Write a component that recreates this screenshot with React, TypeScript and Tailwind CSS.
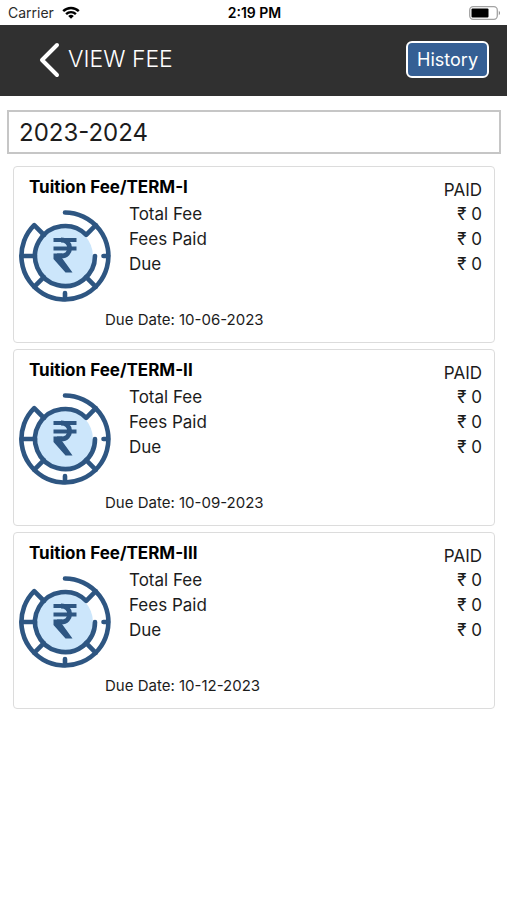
const FEES = [
  { title: "Tuition Fee/TERM-I", status: "PAID", total: 0, paid: 0, due: 0, dueDate: "10-06-2023" },
  { title: "Tuition Fee/TERM-II", status: "PAID", total: 0, paid: 0, due: 0, dueDate: "10-09-2023" },
  { title: "Tuition Fee/TERM-III", status: "PAID", total: 0, paid: 0, due: 0, dueDate: "10-12-2023" },
];

type Fee = (typeof FEES)[number];

function WifiIcon() {
  return (
    <svg viewBox="0 0 18 13" className="h-[13px] w-[18px]" fill="none" stroke="black" strokeWidth="2.4" aria-hidden="true">
      <path d="M1.2 5.2a11 11 0 0 1 15.6 0" />
      <path d="M4.1 8.1a7 7 0 0 1 9.8 0" />
      <path d="M9 12.8 6.2 10a4 4 0 0 1 5.6 0Z" fill="black" stroke="none" />
    </svg>
  );
}

function BatteryIcon() {
  return (
    <svg viewBox="0 0 32 14" className="h-[14px] w-8" aria-hidden="true">
      <rect x="0.7" y="0.7" width="27.6" height="12.6" rx="3.5" fill="white" stroke="#a3a3a3" strokeWidth="1.3" />
      <rect x="2.5" y="2.5" width="17" height="9" rx="1" fill="black" />
      <path d="M29.8 4.8c1.6.8 1.6 3.6 0 4.4Z" fill="#8a8a8a" />
    </svg>
  );
}

function FeeIcon() {
  return (
    <svg
      viewBox="0 0 92 92"
      className="size-[92px] shrink-0"
      fill="none"
      stroke="#2e5682"
      strokeWidth="4.6"
      strokeLinecap="round"
      strokeLinejoin="round"
      aria-hidden="true"
    >
      <circle cx="45" cy="46" r="29" fill="#cce6fb" stroke="none" />
      <path d="M46 2.5A43.5 43.5 0 1 1 15.2 15.2L25 25" />
      <path d="M76 46A30 30 0 1 1 67.2 24.8L76.8 15.2" />
      <path d="M2.5 46H16M15.2 76.8 24.8 67.2M76.8 76.8 67.2 67.2M46 89V83M89 46H84.5" />
      <g strokeWidth="4" strokeLinecap="butt" strokeLinejoin="miter">
        <path d="M34.5 30H57.5M34.5 38.5H57.5" />
        <path d="M42 30C53.5 30 53.5 46 42 46H38" strokeWidth="4.8" />
        <path d="M34.5 43.6H43V48L53.5 62.5H46.5L34.5 49Z" fill="#2e5682" stroke="none" />
      </g>
    </svg>
  );
}

function AmountRow({ label, amount }: { label: string; amount: number }) {
  return (
    <div className="flex justify-between">
      <dt>{label}</dt>
      <dd>₹ {amount}</dd>
    </div>
  );
}

function FeeCard({ fee }: { fee: Fee }) {
  return (
    <li className="rounded border border-[#dcdcdc] pt-2 pr-3 pb-3 pl-[5px] text-[#1c1c1c]">
      <div className="flex items-start justify-between pl-[10px]">
        <h2 className="text-[17px] leading-6 font-bold text-black">{fee.title}</h2>
        <span className="pt-[3px] text-[17px] leading-6">{fee.status}</span>
      </div>
      <div className="flex gap-[18px]">
        <div className="pt-2">
          <FeeIcon />
        </div>
        <dl className="flex-1 text-[17px] leading-[25px]">
          <AmountRow label="Total Fee" amount={fee.total} />
          <AmountRow label="Fees Paid" amount={fee.paid} />
          <AmountRow label="Due" amount={fee.due} />
        </dl>
      </div>
      <p className="pt-2 pl-[86px] text-[15px] leading-5">Due Date: {fee.dueDate}</p>
    </li>
  );
}

export default function App() {
  return (
    <div className="min-h-screen bg-white font-['Inter','Noto_Sans',sans-serif] text-black">
      <div className="grid h-[25px] grid-cols-3 items-center pr-[6px] pl-2 text-sm">
        <div className="flex items-center gap-2 text-[#2b2b2b]">
          Carrier
          <WifiIcon />
        </div>
        <div className="text-center font-semibold">2:19 PM</div>
        <div className="flex justify-end">
          <BatteryIcon />
        </div>
      </div>

      <header className="flex h-[71px] items-center justify-between bg-[#303030] pr-[18px] pb-[2px] pl-[38px]">
        <div className="flex items-center gap-2">
          <button type="button" aria-label="Back">
            <svg viewBox="0 0 22 36" className="h-9 w-[22px]" fill="none" stroke="white" strokeWidth="4" strokeLinecap="round" strokeLinejoin="round">
              <path d="M19 3 4 18 19 33" />
            </svg>
          </button>
          <h1 className="text-[23px] font-light text-white">VIEW FEE</h1>
        </div>
        <button type="button" className="h-[37px] rounded-md border-2 border-white bg-[#355f94] px-[9px] text-lg text-white">
          History
        </button>
      </header>

      <main className="pt-[14px]">
        <div className="pr-[6px] pl-[7px]">
          <select aria-label="Academic year" className="block h-11 w-full appearance-none border-2 border-[#c6c6c6] bg-white px-[10px] pt-[2px] text-2xl text-[#1c1c1c]">
            <option>2023-2024</option>
          </select>
        </div>
        <ul className="flex flex-col gap-[6px] pt-3 pr-3 pl-[13px]">
          {FEES.map((fee) => (
            <FeeCard key={fee.title} fee={fee} />
          ))}
        </ul>
      </main>
    </div>
  );
}
